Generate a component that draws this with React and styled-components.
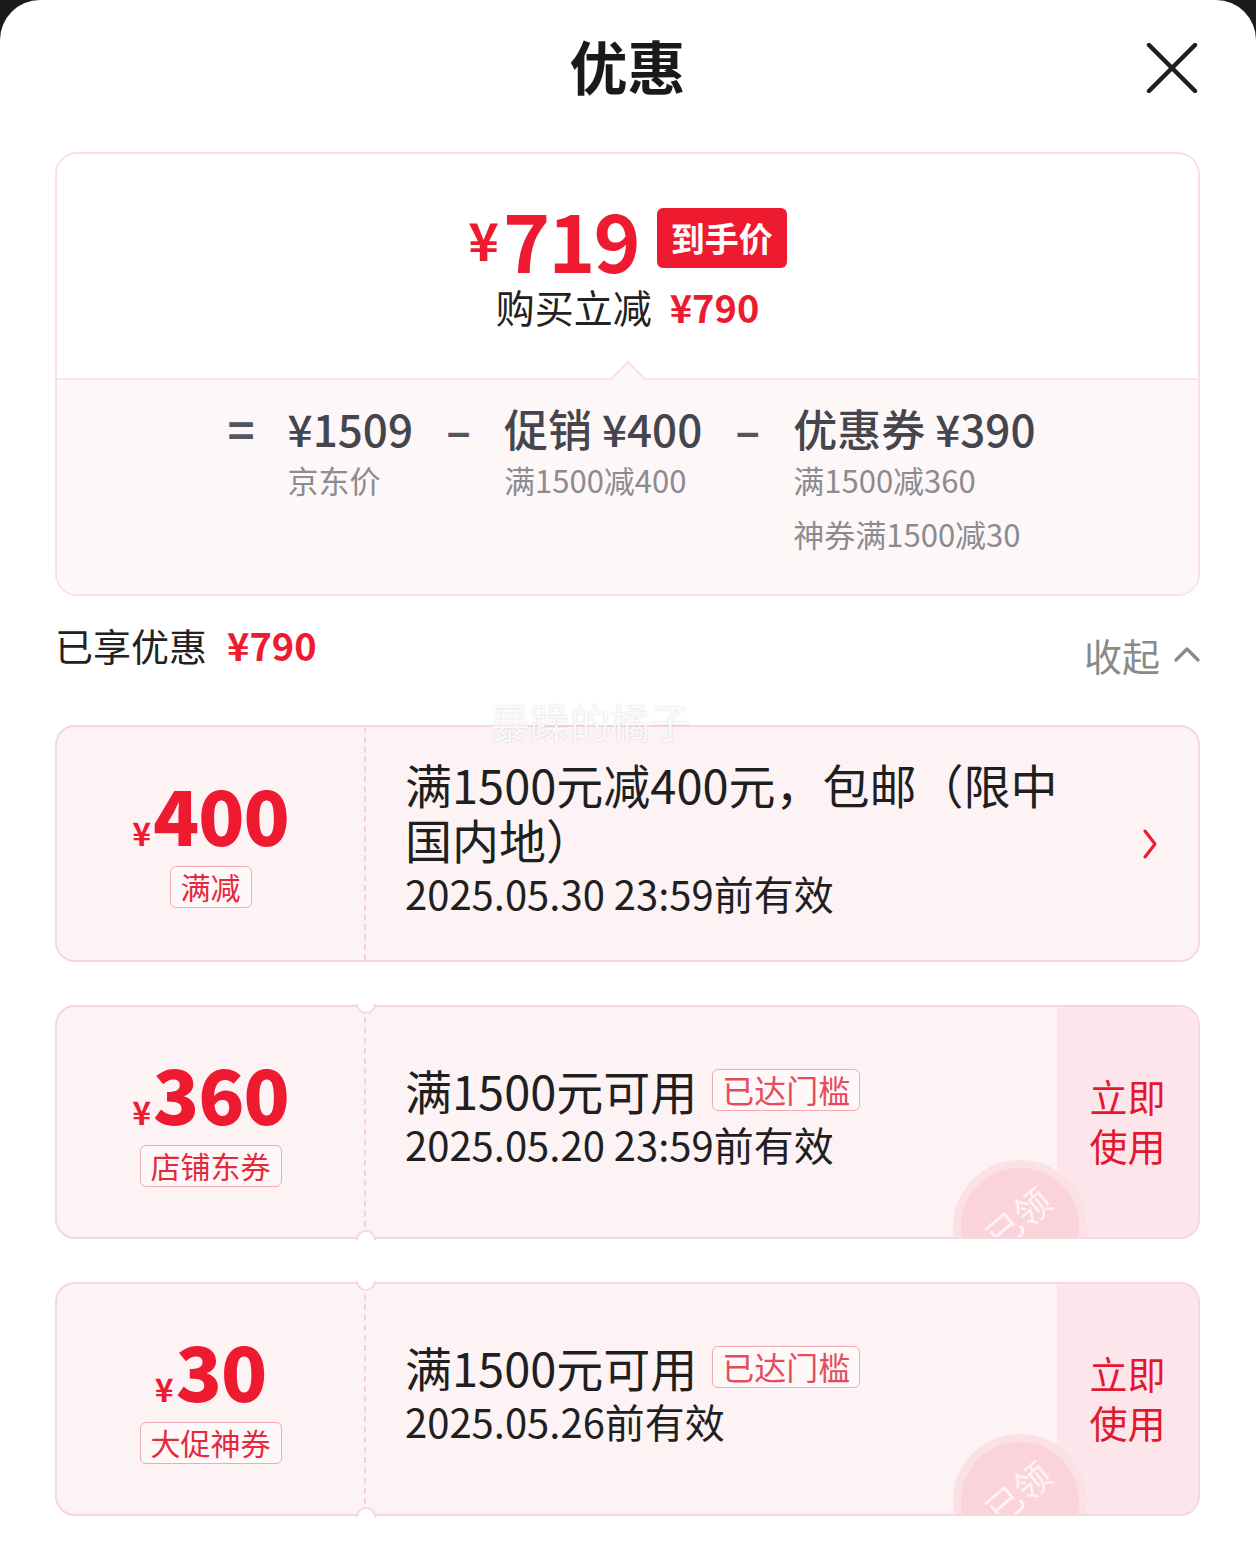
import React from 'react';
import styled, { createGlobalStyle } from 'styled-components';

const RED = '#ee1a2f';
const FONT = '"Noto Sans CJK SC", "Noto Sans", sans-serif';

const GlobalStyle = createGlobalStyle`
  body {
    margin: 0;
    background: #1b1b1b;
    font-family: ${FONT};
  }
`;

const Sheet = styled.div`
  position: relative;
  box-sizing: border-box;
  min-height: 1550px;
  padding: 0 56px 40px 55px;
  background: #fff;
  border-radius: 40px 40px 0 0;
`;

const Header = styled.div`
  display: grid;
  grid-template-columns: 1fr auto 1fr;
  align-items: center;
  height: 130px;
`;

const Title = styled.h1`
  grid-column: 2;
  margin: 0;
  font-size: 58px;
  font-weight: 700;
  color: #1a1a1a;
`;

const Close = styled.button`
  justify-self: end;
  display: flex;
  padding: 0;
  margin: 6px 2px 0 0;
  border: none;
  background: none;
`;

const SummaryCard = styled.div`
  margin-top: 22px;
  border: 2px solid #fae0e5;
  border-radius: 22px;
  overflow: hidden;
`;

const SummaryTop = styled.div`
  display: flex;
  flex-direction: column;
  align-items: center;
  height: 224px;
  box-sizing: border-box;
  padding-top: 44px;
`;

const PriceRow = styled.div`
  display: flex;
  align-items: center;
  height: 80px;
  color: ${RED};
  font-weight: 700;
`;

const Yen = styled.span`
  font-size: ${p => p.$size}px;
  font-weight: 700;
  margin-right: ${p => p.$gap || 0}px;
`;

const BigPrice = styled.span`
  font-size: 80px;
  line-height: 80px;
  letter-spacing: -2px;
`;

const Badge = styled.span`
  margin-left: 18px;
  padding: 0 14px;
  height: 60px;
  line-height: 60px;
  border-radius: 6px;
  background: ${RED};
  color: #fff;
  font-size: 34px;
  font-weight: 700;
`;

const SubLine = styled.div`
  margin-top: 6px;
  line-height: 44px;
  font-size: 39px;
  color: #222;
`;

const RedValue = styled.span`
  margin-left: ${p => p.$gap || 16}px;
  color: ${RED};
  font-size: ${p => p.$size || 36}px;
  font-weight: 600;
`;

const SummaryBottom = styled.div`
  position: relative;
  display: flex;
  justify-content: center;
  gap: 33px;
  padding: 23px 0 33px 8px;
  background: #fef7f8;
  border-top: 2px solid #fbe5e9;
`;

const Notch = styled.span`
  position: absolute;
  top: -14px;
  left: 50%;
  width: 24px;
  height: 24px;
  background: #fef7f8;
  border-top: 2px solid #fbe0e5;
  border-left: 2px solid #fbe0e5;
  transform: translateX(-50%) rotate(45deg);
`;

const Term = styled.div`
  display: flex;
  flex-direction: column;
`;

const TermMain = styled.div`
  line-height: 50px;
  font-size: 44px;
  font-weight: 500;
  color: #45454d;
  white-space: nowrap;
`;

const TermSub = styled.div`
  line-height: 54px;
  font-size: 31px;
  color: #8b8b90;
  white-space: nowrap;
`;

const Operator = styled.div`
  line-height: 50px;
  font-size: 46px;
  font-weight: 700;
  color: #55555c;
`;

const SavedRow = styled.div`
  display: flex;
  justify-content: space-between;
  align-items: center;
  margin-top: 21px;
  height: 54px;
`;

const SavedLabel = styled.div`
  font-size: 38px;
  color: #222;
`;

const Collapse = styled.div`
  display: flex;
  align-items: center;
  gap: 14px;
  padding-top: 20px;
  font-size: 38px;
  color: #8a8a8a;
`;

const Watermark = styled.div`
  position: absolute;
  top: 692px;
  left: 490px;
  font-size: 40px;
  color: rgba(255, 255, 255, 0.9);
  text-shadow: 0 0 2px rgba(0, 0, 0, 0.18);
  z-index: 5;
`;

const CouponList = styled.div`
  display: flex;
  flex-direction: column;
  gap: 43px;
  margin-top: 54px;
`;

const Coupon = styled.div`
  position: relative;
  display: grid;
  grid-template-columns: 309px 1fr ${p => p.$side}px;
  height: ${p => p.$h}px;
  box-sizing: border-box;
  border: 2px solid #f7d7dd;
  border-radius: 20px;
  background: #fdf3f5;
`;

const Left = styled.div`
  display: flex;
  flex-direction: column;
  align-items: center;
  justify-content: center;
  border-right: 2px dashed #f6d2d8;
`;

const CouponPrice = styled.div`
  display: flex;
  align-items: baseline;
  line-height: 68px;
  color: ${RED};
  font-weight: 700;
`;

const CouponAmount = styled.span`
  font-size: ${p => p.$size}px;
  font-weight: 900;
  letter-spacing: -1px;
`;

const Tag = styled.span`
  box-sizing: border-box;
  height: 42px;
  line-height: 38px;
  margin-left: ${p => p.$offset || 0}px;
  padding: 0 ${p => p.$pad || 10}px;
  border: 1.5px solid #f2a9b2;
  border-radius: 6px;
  background: #fff8f9;
  color: ${p => p.$color || '#e5293c'};
  font-size: ${p => p.$size || 30}px;
  white-space: nowrap;
`;

const Middle = styled.div`
  display: flex;
  flex-direction: column;
  justify-content: center;
  padding: 0 0 10px 39px;
`;

const CouponTitle = styled.div`
  display: flex;
  align-items: center;
  max-width: 680px;
  line-height: 55px;
  font-size: 47px;
  color: #1f1f1f;
`;

const CouponDate = styled.div`
  line-height: 55px;
  font-size: 40px;
  color: #1f1f1f;
`;

const Arrow = styled.div`
  display: flex;
  align-items: center;
  justify-content: center;
`;

const UseNow = styled.div`
  display: flex;
  flex-direction: column;
  align-items: center;
  justify-content: center;
  padding-bottom: 4px;
  background: #fde6eb;
  border-radius: 0 18px 18px 0;
  color: #e3182f;
  font-size: 38px;
  line-height: 49px;
`;

const Hole = styled.span`
  position: absolute;
  left: 299px;
  ${p => (p.$bottom ? 'bottom: -13px;' : 'top: -13px;')}
  width: 20px;
  height: 20px;
  box-sizing: border-box;
  border-radius: 50%;
  background: #fff;
  border: 2px solid #f7d7dd;
  clip-path: ${p => (p.$bottom ? 'inset(0 0 50% 0)' : 'inset(50% 0 0 0)')};
`;

const StampClip = styled.div`
  position: absolute;
  inset: 0;
  border-radius: 18px;
  overflow: hidden;
  pointer-events: none;
`;

const Stamp = styled.div`
  position: absolute;
  top: ${p => p.$top}px;
  right: 111px;
  width: 134px;
  height: 134px;
  box-sizing: border-box;
  border-radius: 50%;
  border: 8px solid #fbe1e6;
  background: #fbd3da;
  display: flex;
  align-items: center;
  justify-content: center;
`;

const StampText = styled.span`
  margin: -20px 0 0 -6px;
  transform: rotate(-40deg);
  color: rgba(255, 255, 255, 0.75);
  font-size: 36px;
`;

const coupons = [
  {
    amount: '360',
    tag: '店铺东券',
    date: '2025.05.20 23:59前有效',
    stampTop: 153,
  },
  {
    amount: '30',
    tag: '大促神券',
    date: '2025.05.26前有效',
    stampTop: 150,
  },
];

function XIcon() {
  return (
    <svg width="52" height="50" viewBox="0 0 52 50">
      <path d="M3 2 L49 48 M49 2 L3 48" stroke="#1e1e1e" strokeWidth="4.5" strokeLinecap="round" />
    </svg>
  );
}

function ChevronUp() {
  return (
    <svg width="26" height="16" viewBox="0 0 26 16">
      <path d="M2 14 L13 3 L24 14" fill="none" stroke="#8a8a8a" strokeWidth="3.2" strokeLinecap="round" strokeLinejoin="round" />
    </svg>
  );
}

function ChevronRight() {
  return (
    <svg width="16" height="30" viewBox="0 0 16 30">
      <path d="M3 2 L13 15 L3 28" fill="none" stroke={RED} strokeWidth="3" strokeLinecap="round" strokeLinejoin="round" />
    </svg>
  );
}

export default function App() {
  return (
    <>
      <GlobalStyle />
      <Sheet>
        <Header>
          <Title>优惠</Title>
          <Close aria-label="关闭"><XIcon /></Close>
        </Header>

        <SummaryCard>
          <SummaryTop>
            <PriceRow>
              <Yen $size={52} $gap={4}>¥</Yen>
              <BigPrice>719</BigPrice>
              <Badge>到手价</Badge>
            </PriceRow>
            <SubLine>
              购买立减<RedValue $size={38} $gap={18}>¥790</RedValue>
            </SubLine>
          </SummaryTop>
          <SummaryBottom>
            <Notch />
            <Operator>=</Operator>
            <Term>
              <TermMain>¥1509</TermMain>
              <TermSub>京东价</TermSub>
            </Term>
            <Operator>–</Operator>
            <Term>
              <TermMain>促销 ¥400</TermMain>
              <TermSub>满1500减400</TermSub>
            </Term>
            <Operator>–</Operator>
            <Term>
              <TermMain>优惠券 ¥390</TermMain>
              <TermSub>满1500减360</TermSub>
              <TermSub>神券满1500减30</TermSub>
            </Term>
          </SummaryBottom>
        </SummaryCard>

        <SavedRow>
          <SavedLabel>
            已享优惠<RedValue $size={38} $gap={20}>¥790</RedValue>
          </SavedLabel>
          <Collapse>
            收起 <ChevronUp />
          </Collapse>
        </SavedRow>

        <Watermark>暴躁的橘子</Watermark>

        <CouponList>
          <Coupon $h={237} $side={96}>
            <Left>
              <CouponPrice>
                <Yen $size={32} $gap={2}>¥</Yen>
                <CouponAmount $size={76}>400</CouponAmount>
              </CouponPrice>
              <Tag>满减</Tag>
            </Left>
            <Middle>
              <CouponTitle>满1500元减400元，包邮（限中国内地）</CouponTitle>
              <CouponDate>2025.05.30 23:59前有效</CouponDate>
            </Middle>
            <Arrow><ChevronRight /></Arrow>
          </Coupon>

          {coupons.map(c => (
            <Coupon key={c.amount} $h={234} $side={141}>
              <StampClip>
                <Stamp $top={c.stampTop}>
                  <StampText>已领</StampText>
                </Stamp>
              </StampClip>
              <Hole />
              <Hole $bottom />
              <Left>
                <CouponPrice>
                  <Yen $size={32} $gap={2}>¥</Yen>
                  <CouponAmount $size={76}>{c.amount}</CouponAmount>
                </CouponPrice>
                <Tag>{c.tag}</Tag>
              </Left>
              <Middle>
                <CouponTitle>
                  满1500元可用
                  <Tag $size={32} $pad={9} $offset={15} $color="#e64d5c">已达门槛</Tag>
                </CouponTitle>
                <CouponDate>{c.date}</CouponDate>
              </Middle>
              <UseNow>
                <span>立即</span>
                <span>使用</span>
              </UseNow>
            </Coupon>
          ))}
        </CouponList>
      </Sheet>
    </>
  );
}
